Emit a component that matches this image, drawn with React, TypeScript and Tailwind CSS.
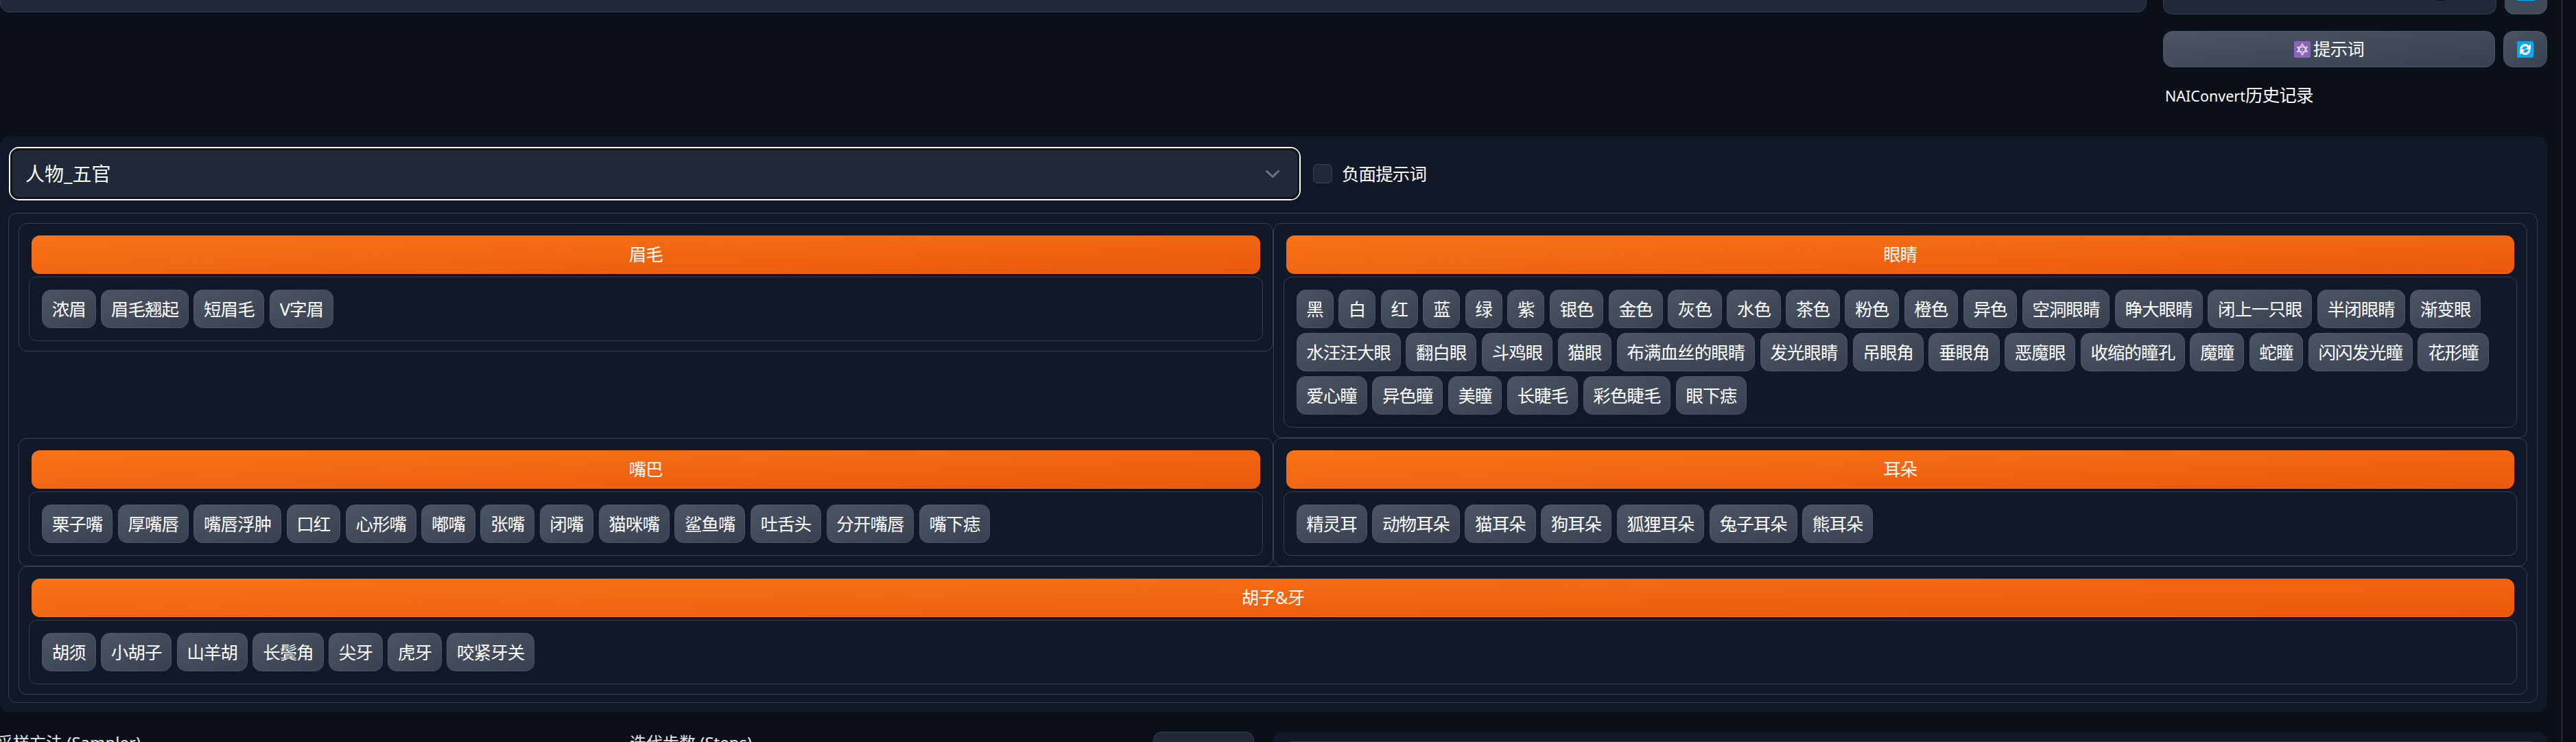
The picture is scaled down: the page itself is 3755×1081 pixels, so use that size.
import React from "react";

const sections = [
  { title: "眉毛", tags: ["浓眉", "眉毛翘起", "短眉毛", "V字眉"] },
  {
    title: "眼睛",
    tags: [
      "黑", "白", "红", "蓝", "绿", "紫", "银色", "金色", "灰色", "水色", "茶色", "粉色", "橙色", "异色",
      "空洞眼睛", "睁大眼睛", "闭上一只眼", "半闭眼睛", "渐变眼", "水汪汪大眼", "翻白眼", "斗鸡眼", "猫眼",
      "布满血丝的眼睛", "发光眼睛", "吊眼角", "垂眼角", "恶魔眼", "收缩的瞳孔", "魔瞳", "蛇瞳", "闪闪发光瞳",
      "花形瞳", "爱心瞳", "异色瞳", "美瞳", "长睫毛", "彩色睫毛", "眼下痣",
    ],
  },
  {
    title: "嘴巴",
    tags: ["栗子嘴", "厚嘴唇", "嘴唇浮肿", "口红", "心形嘴", "嘟嘴", "张嘴", "闭嘴", "猫咪嘴", "鲨鱼嘴", "吐舌头", "分开嘴唇", "嘴下痣"],
  },
  { title: "耳朵", tags: ["精灵耳", "动物耳朵", "猫耳朵", "狗耳朵", "狐狸耳朵", "兔子耳朵", "熊耳朵"] },
  { title: "胡子&牙", tags: ["胡须", "小胡子", "山羊胡", "长鬓角", "尖牙", "虎牙", "咬紧牙关"], wide: true },
];

function RefreshEmoji() {
  return (
    <svg width="24" height="24" viewBox="0 0 24 24" className="shrink-0">
      <rect width="24" height="24" rx="2" fill="#03a9f1" />
      <path d="M6 11.500a6 6 0 0 1 10.500-3.800" fill="none" stroke="#fff" strokeWidth="3.200" />
      <path d="M20 4v8h-8z" fill="#fff" />
      <path d="M18 12.500a6 6 0 0 1-10.500 3.800" fill="none" stroke="#fff" strokeWidth="3.200" />
      <path d="M4 20v-8h8z" fill="#fff" />
    </svg>
  );
}

function StarEmoji() {
  return (
    <svg width="24" height="24" viewBox="0 0 24 24" className="shrink-0">
      <rect width="24" height="24" rx="2" fill="#8c62c3" />
      <path d="M12 4l7 11.500H5z M12 20l-7-11.500h14z" fill="none" stroke="#fff" strokeWidth="1.200" />
      <circle cx="12" cy="12" r="0.800" fill="#fff" />
    </svg>
  );
}

function Section({ title, tags, wide }: { title: string; tags: string[]; wide?: boolean }) {
  return (
    <div className={`border border-[#374151] rounded-[12px] px-[14px] pt-[17px] pb-[14px] ${wide ? "col-span-2" : ""}`}>
      <div className="mx-[4px] h-[56px] rounded-[12px] border-b border-[#f97316] bg-gradient-to-br from-[#f97316] to-[#ea580c] flex items-center justify-center text-[25.5px] tracking-[-0.9px] text-white">
        {title}
      </div>
      <div className="mt-[4px] border border-[#374151] rounded-[12px] p-[18px] flex flex-wrap gap-x-[7.5px] gap-y-[7px]">
        {tags.map((tag) => (
          <span
            key={tag}
            className="h-[56px] flex items-center px-[13.75px] rounded-[13px] border border-[#4b5563] bg-gradient-to-br from-[#4b5563] to-[#374151] text-[25.5px] tracking-[-0.95px] text-white whitespace-nowrap"
          >
            {tag}
          </span>
        ))}
      </div>
    </div>
  );
}

export default function App() {
  return (
    <div className="w-[3755px] h-[1081px] overflow-hidden flex bg-[#0b0f19] font-['Noto_Sans','Noto_Sans_CJK_SC',sans-serif] text-white">
      <div className="w-[3734px] shrink-0 pr-[21px]">
        {/* clipped row above the fold */}
        <div className="h-[21px] flex items-start">
          <div className="w-[3129px] h-[18px] bg-[#1f2937] border border-t-0 border-[#374151] rounded-b-[14px]" />
          <div className="ml-[24px] w-[486px] h-[21px] bg-[#1f2937] border border-t-0 border-[#374151] rounded-b-[14px] flex justify-end pr-[74px]">
            <div className="w-[12px] h-[1px] rounded-b-full bg-[#0b0f19]" />
          </div>
          <div className="ml-[12px] w-[62px] h-[21px] bg-[#414b5a] border border-t-0 border-[#4b5563] rounded-b-[14px] flex justify-center">
            <div className="w-[26px] h-[1px] bg-[#03a9f1]" />
          </div>
        </div>

        {/* prompt buttons */}
        <div className="mt-[24px] flex justify-end gap-[12px]">
          <button className="w-[484px] h-[53px] rounded-[14px] border border-[#4b5563] bg-gradient-to-br from-[#4b5563] to-[#374151] flex items-center justify-center gap-[4px] text-[25.5px] tracking-[-0.9px]">
            <StarEmoji />
            <span>提示词</span>
          </button>
          <button className="w-[64px] h-[53px] rounded-[14px] border border-[#4b5563] bg-gradient-to-br from-[#4b5563] to-[#374151] flex items-center justify-center">
            <RefreshEmoji />
          </button>
        </div>
        <div className="mt-[24px] pl-[3156px] h-[32px] leading-[32px] text-[25.5px] tracking-[-0.8px] whitespace-nowrap">
          <span className="text-[21.5px] tracking-normal">NAIConvert</span>历史记录
        </div>

        {/* main panel */}
        <div className="mt-[45px] h-[839px] bg-[#111827] rounded-[14px] px-[12px] pt-[15px]">
          <div className="flex items-center">
            <div className="ml-[1px] w-[1883px] h-[78px] rounded-[15px] border-2 border-white">
              <div className="h-full rounded-[12px] border-[3px] border-[#131517] bg-[#1f2937] flex items-center justify-between pl-[19px] pr-[25px] text-[28px] text-white">
                <span>人物_五官</span>
                <svg width="22" height="13" viewBox="0 0 22 13" fill="none" stroke="#6b7280" strokeWidth="3">
                  <path d="M1.500 1.500L11 10.500L20.500 1.500" />
                </svg>
              </div>
            </div>
            <div className="ml-[18px] w-[28px] h-[28px] rounded-[6px] bg-[#1f2937] border border-[#374151]" />
            <span className="ml-[14px] text-[25.5px] tracking-[-0.9px]">负面提示词</span>
          </div>

          <div className="mt-[18px] border border-[#374151] rounded-[12px] p-[14px] h-[714px] w-[3687px]">
            <div className="grid grid-cols-2 items-start">
              {sections.map((s) => (
                <Section key={s.title} title={s.title} tags={s.tags} wide={s.wide} />
              ))}
            </div>
          </div>
        </div>

        {/* next row, cut off by the window */}
        <div className="mt-[28px] flex items-start">
          <div className="w-[923px] -ml-[5px] shrink-0 text-[24px] leading-[32px] text-[#e5e7eb] whitespace-nowrap">采样方法 (Sampler)</div>
          <div className="flex-1 text-[24px] leading-[32px] text-[#e5e7eb] whitespace-nowrap">迭代步数 (Steps)</div>
          <div className="w-[147px] h-[60px] rounded-[12px] bg-[#1f2937] border border-[#374151] text-center text-[24px] pt-[4px]">20</div>
          <div className="ml-[28px] w-[1857px] h-[60px] rounded-t-[14px] bg-[#111827] pl-[14px] pr-[14px] pt-[14px]">
            <div className="h-[40px] border border-[#374151] rounded-t-[12px]" />
          </div>
        </div>
      </div>
      <div className="flex-1 border-l border-[#374151] bg-[#080b11]" />
    </div>
  );
}
